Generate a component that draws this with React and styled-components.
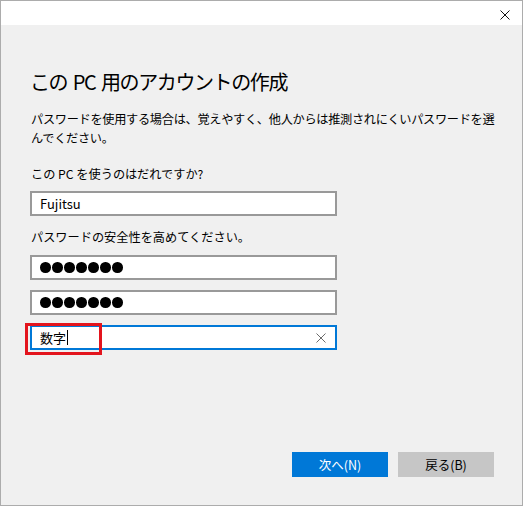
import React from 'react';
import styled, { createGlobalStyle } from 'styled-components';

const GlobalStyle = createGlobalStyle`
  html, body {
    margin: 0;
    padding: 0;
    background: #ffffff;
  }
  body {
    font-family: "Noto Sans CJK JP", "Noto Sans", sans-serif;
    color: #000;
  }
`;

const Window = styled.div`
  width: 523px;
  height: 506px;
  box-sizing: border-box;
  border: 1px solid #acacac;
  background: #f0f0f0;
  display: flex;
  flex-direction: column;
`;

const TitleBar = styled.div`
  height: 24px;
  background: #ffffff;
  display: flex;
  justify-content: flex-end;
  align-items: center;
  padding-right: 12px;
`;

const CloseButton = styled.button`
  border: none;
  background: transparent;
  padding: 0;
  width: 10px;
  height: 10px;
  display: flex;
  margin-top: 3px;
`;

const Content = styled.div`
  flex: 1;
  display: flex;
  flex-direction: column;
  padding: 0 28px 0 29px;
`;

const Heading = styled.h1`
  margin: 43px 0 0 0;
  font-size: 20px;
  font-weight: 400;
  line-height: 28px;
  letter-spacing: -1.4px;
  word-spacing: 2.5px;
`;

const Intro = styled.p`
  margin: 14px 0 0 1px;
  font-size: 12.2px;
  line-height: 19px;
  letter-spacing: -0.3px;
  width: 470px;
`;

const Label = styled.div`
  margin: ${(p) => p.$top}px 0 0 1px;
  font-size: 12.2px;
  line-height: 19px;
`;

const Field = styled.div`
  position: relative;
  width: 307px;
  height: 25px;
  box-sizing: border-box;
  margin-top: ${(p) => p.$top}px;
  border: 2px solid ${(p) => (p.$focused ? '#0078d7' : '#999999')};
  background: #ffffff;
  display: flex;
  align-items: center;
  padding: 0 8px;
  font-size: 13px;
`;

const FieldText = styled.span`
  line-height: 18px;
  flex: 1;
  display: flex;
  align-items: center;
`;

const Dots = styled.div`
  display: flex;
  gap: 1.5px;
`;

const Dot = styled.span`
  width: 10.5px;
  height: 10.5px;
  border-radius: 50%;
  background: #000;
`;

const Caret = styled.span`
  display: inline-block;
  width: 1px;
  height: 15px;
  background: #000;
  margin-left: 1px;
`;

const ClearIcon = styled.svg`
  width: 10px;
  height: 10px;
  margin-right: 1px;
`;

const Highlight = styled.div`
  position: absolute;
  left: -7px;
  top: -4px;
  width: 77px;
  height: 32px;
  box-sizing: border-box;
  border: 3px solid #e3141d;
  pointer-events: none;
`;

const Footer = styled.div`
  margin-top: auto;
  margin-bottom: 28px;
  display: flex;
  justify-content: flex-end;
  gap: 10px;
`;

const Button = styled.button`
  width: 96px;
  height: 25px;
  border: none;
  padding: 0;
  font-family: inherit;
  font-size: 12.5px;
  background: ${(p) => (p.$primary ? '#0078d7' : '#c6c6c6')};
  color: ${(p) => (p.$primary ? '#ffffff' : '#000000')};
`;

const passwordDots = Array.from({ length: 7 });

export default function App() {
  return (
    <>
      <GlobalStyle />
      <Window>
        <TitleBar>
          <CloseButton aria-label="閉じる">
            <svg width="10" height="10" viewBox="0 0 10 10">
              <path d="M0.5 0.5 L9.5 9.5 M9.5 0.5 L0.5 9.5" stroke="#111" strokeWidth="1" />
            </svg>
          </CloseButton>
        </TitleBar>
        <Content>
          <Heading>この PC 用のアカウントの作成</Heading>
          <Intro>
            パスワードを使用する場合は、覚えやすく、他人からは推測されにくいパスワードを選んでください。
          </Intro>
          <Label $top={17}>この PC を使うのはだれですか?</Label>
          <Field $top={7}>
            <FieldText>Fujitsu</FieldText>
          </Field>
          <Label $top={12}>パスワードの安全性を高めてください。</Label>
          <Field $top={8}>
            <Dots>
              {passwordDots.map((_, i) => (
                <Dot key={i} />
              ))}
            </Dots>
          </Field>
          <Field $top={10}>
            <Dots>
              {passwordDots.map((_, i) => (
                <Dot key={i} />
              ))}
            </Dots>
          </Field>
          <Field $top={10} $focused>
            <FieldText>
              数字
              <Caret />
            </FieldText>
            <ClearIcon viewBox="0 0 10 10">
              <path d="M0.5 0.5 L9.5 9.5 M9.5 0.5 L0.5 9.5" stroke="#6b6b6b" strokeWidth="1" />
            </ClearIcon>
            <Highlight />
          </Field>
          <Footer>
            <Button $primary>次へ(N)</Button>
            <Button>戻る(B)</Button>
          </Footer>
        </Content>
      </Window>
    </>
  );
}
